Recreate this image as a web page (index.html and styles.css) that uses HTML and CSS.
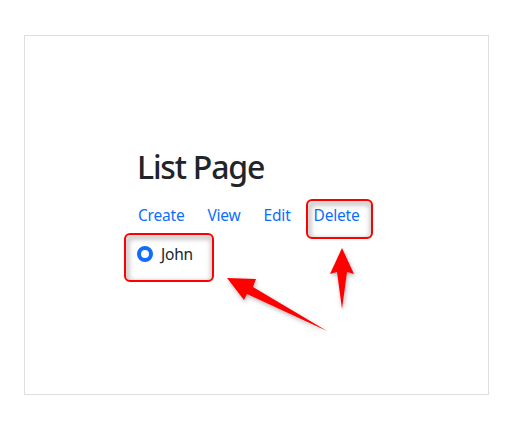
FILE: index.html
```html
<!DOCTYPE html>
<html lang="en">
<head>
<meta charset="utf-8">
<title>List Page</title>
<link rel="stylesheet" href="styles.css">
</head>
<body>
<div class="frame">
  <div class="content">
    <h1 class="title">List Page</h1>
    <nav class="actions">
      <a href="#" class="action">Create</a>
      <a href="#" class="action">View</a>
      <a href="#" class="action">Edit</a>
      <a href="#" class="action">Delete</a>
    </nav>
    <label class="item">
      <span class="radio"></span>
      <span class="item-label">John</span>
    </label>
  </div>
</div>
<svg class="annotations" width="529" height="442" viewBox="0 0 529 442" xmlns="http://www.w3.org/2000/svg">
  <defs>
    <filter id="blur" x="-20%" y="-20%" width="140%" height="140%">
      <feGaussianBlur stdDeviation="2.5"/>
    </filter>
    <filter id="shadow" x="-20%" y="-20%" width="140%" height="140%">
      <feDropShadow dx="1" dy="2" stdDeviation="2" flood-color="#000" flood-opacity="0.3"/>
    </filter>
    <clipPath id="clipDelete"><rect x="307" y="200" width="65" height="38" rx="5"/></clipPath>
    <clipPath id="clipJohn"><rect x="125" y="234" width="88" height="47" rx="5"/></clipPath>
  </defs>
  <g clip-path="url(#clipDelete)">
    <rect x="309" y="203" width="63" height="37" rx="5" fill="none" stroke="#000" stroke-opacity="0.28" stroke-width="4" filter="url(#blur)"/>
  </g>
  <g clip-path="url(#clipJohn)">
    <rect x="127" y="237" width="86" height="46" rx="5" fill="none" stroke="#000" stroke-opacity="0.28" stroke-width="4" filter="url(#blur)"/>
  </g>
  <rect x="307" y="200" width="65" height="38" rx="5" fill="none" stroke="#f00" stroke-width="2"/>
  <rect x="125" y="234" width="88" height="47" rx="5" fill="none" stroke="#f00" stroke-width="2"/>
  <polygon points="227,278 256,279 253,287 327,331 247,294 244,300" fill="#f00" filter="url(#shadow)"/>
  <polygon points="342,248 354,274 347,272 342,309 337,272 330,274" fill="#f00" filter="url(#shadow)"/>
</svg>
</body>
</html>
```

FILE: styles.css
```css
html, body {
  margin: 0;
  padding: 0;
  background: #fff;
}

body {
  width: 529px;
  height: 442px;
  padding: 35px 0 0 24px;
  box-sizing: border-box;
  font-family: "Noto Sans", "Open Sans", sans-serif;
  color: #212529;
  position: relative;
}

.frame {
  width: 465px;
  height: 360px;
  box-sizing: border-box;
  border: 1px solid #dedede;
}

.content {
  padding: 112px 0 0 114px;
  display: flex;
  flex-direction: column;
  align-items: flex-start;
}

.title {
  margin: 0 0 0 -2px;
  font-size: 32px;
  font-weight: 500;
  line-height: 38.4px;
  letter-spacing: -1.2px;
}

.actions {
  display: flex;
  gap: 23px;
  margin-top: 17px;
  margin-left: -1px;
}

.action {
  font-size: 15.5px;
  line-height: 24px;
  color: #0d6efd;
  text-decoration: none;
  letter-spacing: -0.2px;
}

.item {
  display: flex;
  align-items: center;
  gap: 8px;
  margin-top: 15px;
  margin-left: -2px;
  font-size: 15.5px;
  line-height: 24px;
}

.radio {
  width: 16px;
  height: 16px;
  box-sizing: border-box;
  border-radius: 50%;
  border: 4.5px solid #0d6efd;
  background: #fff;
}

.item-label {
  letter-spacing: -0.2px;
}

.annotations {
  position: absolute;
  left: 0;
  top: 0;
  pointer-events: none;
}
```
